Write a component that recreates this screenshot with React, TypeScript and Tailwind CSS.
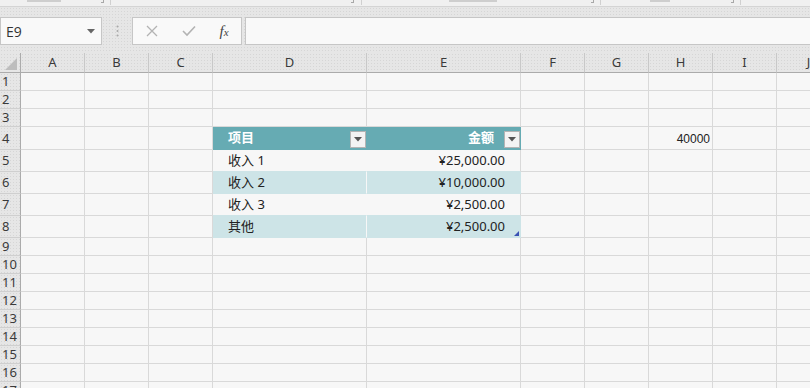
import React from 'react'

const COLS = ['A', 'B', 'C', 'D', 'E', 'F', 'G', 'H', 'I', 'J']

type Row = { n: number; h: string }

const ROWS: Row[] = [
  { n: 1, h: 'h-[18px]' },
  { n: 2, h: 'h-[18px]' },
  { n: 3, h: 'h-[18px]' },
  { n: 4, h: 'h-[23px]' },
  { n: 5, h: 'h-[22px]' },
  { n: 6, h: 'h-[22px]' },
  { n: 7, h: 'h-[22px]' },
  { n: 8, h: 'h-[22px]' },
  { n: 9, h: 'h-[18px]' },
  { n: 10, h: 'h-[18px]' },
  { n: 11, h: 'h-[18px]' },
  { n: 12, h: 'h-[18px]' },
  { n: 13, h: 'h-[18px]' },
  { n: 14, h: 'h-[18px]' },
  { n: 15, h: 'h-[18px]' },
  { n: 16, h: 'h-[18px]' },
  { n: 17, h: 'h-[18px]' },
]

const TABLE: Record<number, [string, string]> = {
  5: ['收入 1', '¥25,000.00'],
  6: ['收入 2', '¥10,000.00'],
  7: ['收入 3', '¥2,500.00'],
  8: ['其他', '¥2,500.00'],
}

const dotted =
  'bg-[#e6e6e6] bg-[radial-gradient(#d6d6d6_0.6px,transparent_0.8px)] bg-[length:3px_3px]'

function FilterButton() {
  return (
    <div className="absolute right-0 top-[4px] flex h-[17px] w-[16px] items-center justify-center border border-[#b4b4b4] bg-[#f3f3f3]">
      <svg width="8" height="5" viewBox="0 0 8 5">
        <path d="M0 0h8L4 4.5z" fill="#555" />
      </svg>
    </div>
  )
}

function Cell({ row, col }: { row: number; col: string }) {
  const base = 'relative flex items-center overflow-hidden border-r border-b'

  // table header
  if (row === 4 && (col === 'D' || col === 'E')) {
    return (
      <div className={`${base} border-[#66abb3] bg-[#66abb3] font-bold text-white ${col === 'D' ? 'pl-[15px]' : 'justify-end pr-[26px]'}`}>
        <span>{col === 'D' ? '项目' : '金额'}</span>
        <FilterButton />
      </div>
    )
  }

  const data = TABLE[row]
  if (data && (col === 'D' || col === 'E')) {
    const banded = row === 6 || row === 8
    const bg = banded ? 'bg-[#cde4e7]' : 'bg-[#f7f7f7]'
    const right =
      col === 'D' ? 'border-r-[#f7f7f7]' : banded ? 'border-r-[#cde4e7]' : 'border-r-[#d9d9d9]'
    return (
      <div className={`${base} ${bg} ${right} border-b-[#cde4e7] text-[#222] ${col === 'D' ? 'pl-[15px]' : 'justify-end pr-[15px]'}`}>
        <span>{col === 'D' ? data[0] : data[1]}</span>
        {row === 8 && col === 'E' && (
          <svg className="absolute right-[1px] bottom-[1px]" width="5" height="5" viewBox="0 0 5 5">
            <path d="M5 0v5H0z" fill="#3b52b4" />
          </svg>
        )}
      </div>
    )
  }

  if (row === 4 && col === 'H') {
    return (
      <div className={`${base} border-[#d9d9d9] bg-[#f7f7f7] justify-end pr-[2px] pt-[1px] font-['Liberation_Sans',sans-serif] text-[12px] text-[#222]`}>
        40000
      </div>
    )
  }

  return <div className={`${base} border-[#d9d9d9] bg-[#f7f7f7]`} />
}

function Launcher({ x }: { x: string }) {
  return (
    <>
      <div className={`absolute ${x} top-0 h-[3px] w-[3px] border-r border-b border-[#8a8a8a] opacity-70`} />
    </>
  )
}

export default function App() {
  return (
    <div className="h-[388px] w-[810px] overflow-hidden bg-[#f7f7f7] font-['Noto_Sans','Noto_Sans_CJK_SC',sans-serif] text-[13px]">
      {/* ribbon remnant */}
      <div className="relative h-[7px] border-b border-[#d4d4d4] bg-[#f0f0f0]">
        <div className="absolute left-[27px] top-0 h-[2px] w-[34px] bg-[#9a9a9a] opacity-40" />
        <Launcher x="left-[101px]" />
        <div className="absolute left-[110px] top-0 h-[5px] w-px bg-[#d0d0d0]" />
        <Launcher x="left-[351px]" />
        <div className="absolute left-[361px] top-0 h-[5px] w-px bg-[#d0d0d0]" />
        <div className="absolute left-[449px] top-0 h-[2px] w-[48px] bg-[#9a9a9a] opacity-40" />
        <Launcher x="left-[591px]" />
        <div className="absolute left-[600px] top-0 h-[5px] w-px bg-[#d0d0d0]" />
        <div className="absolute left-[650px] top-0 h-[2px] w-[20px] bg-[#9a9a9a] opacity-40" />
        <Launcher x="left-[731px]" />
        <div className="absolute left-[740px] top-0 h-[5px] w-px bg-[#d0d0d0]" />
      </div>

      {/* formula bar */}
      <div className={`${dotted} pt-[10px] pb-[8px]`}>
        <div className="flex h-[28px] items-stretch">
          <div className="flex w-[102px] items-center justify-between border border-[#c6c6c6] bg-[#f9f9f9] pl-[5px] pr-[6px]">
            <span className="font-['Open_Sans',sans-serif] text-[14px] text-[#333]">E9</span>
            <svg width="8" height="5" viewBox="0 0 8 5">
              <path d="M0 0h8L4 4.5z" fill="#666" />
            </svg>
          </div>
          <div className="flex w-[30px] items-center justify-center">
            <svg width="3" height="12" viewBox="0 0 3 12">
              <circle cx="1.5" cy="1.5" r="1" fill="#a8a8a8" />
              <circle cx="1.5" cy="6" r="1" fill="#a8a8a8" />
              <circle cx="1.5" cy="10.5" r="1" fill="#a8a8a8" />
            </svg>
          </div>
          <div className="flex w-[110px] items-center border border-[#c6c6c6] bg-[#f9f9f9]">
            <div className="flex w-[37px] justify-center">
              <svg width="12" height="12" viewBox="0 0 12 12">
                <path d="M1 1l10 10M11 1L1 11" stroke="#b3b3b3" strokeWidth="1.3" />
              </svg>
            </div>
            <div className="flex w-[37px] justify-center">
              <svg width="14" height="12" viewBox="0 0 14 12">
                <path d="M1 6l4 4L13 1.5" stroke="#b3b3b3" strokeWidth="1.6" fill="none" />
              </svg>
            </div>
            <div className="flex w-[34px] items-baseline justify-center font-['Liberation_Serif',serif] text-[15px] italic leading-none text-[#444]">
              <span>f</span>
              <span className="text-[11px]">x</span>
            </div>
          </div>
          <div className="ml-[3px] flex-1 border border-r-0 border-[#c6c6c6] bg-[#f9f9f9]" />
        </div>
      </div>

      {/* sheet */}
      <div className="grid grid-cols-[21px_64px_64px_64px_154px_154px_64px_64px_64px_64px_64px]">
        {/* column header */}
        <div className={`${dotted} relative h-[20px] border-r border-b border-r-[#ababab] border-b-[#ababab]`}>
          <svg className="absolute left-[5px] top-[5px]" width="12" height="12" viewBox="0 0 12 12">
            <path d="M12 0v12H0z" fill="#bdbdbd" />
          </svg>
        </div>
        {COLS.map(c => (
          <div
            key={c}
            className={`${dotted} flex h-[20px] items-center justify-center border-r border-b border-r-[#c8c8c8] border-b-[#ababab] text-[13px] leading-none text-[#3a3a3a]`}
          >
            {c}
          </div>
        ))}

        {ROWS.map(r => (
          <React.Fragment key={r.n}>
            <div className={`${dotted} ${r.h} flex items-center border-r border-b border-r-[#ababab] border-b-[#cfcfcf] pl-[2px] text-[13px] leading-none text-[#3a3a3a]`}>
              {r.n}
            </div>
            {COLS.map(c => (
              <div key={c} className={`${r.h} grid`}>
                <Cell row={r.n} col={c} />
              </div>
            ))}
          </React.Fragment>
        ))}
      </div>
    </div>
  )
}
